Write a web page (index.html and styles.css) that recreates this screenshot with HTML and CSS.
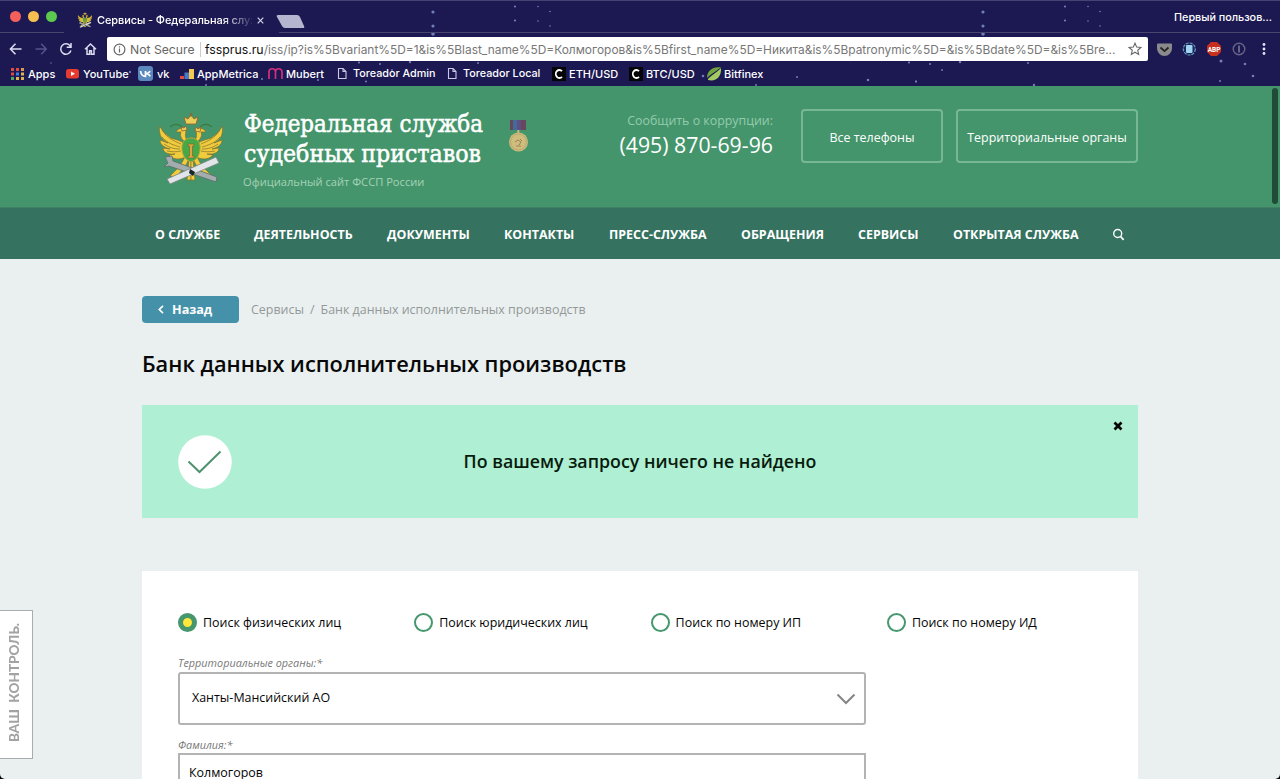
FILE: index.html
```html
<!DOCTYPE html>
<html lang="ru">
<head>
<meta charset="utf-8">
<title>Сервисы - Федеральная служба судебных приставов</title>
<link rel="stylesheet" href="styles.css">
</head>
<body>
<div class="window">
  <header class="chrome">
    <svg class="stars" width="1280" height="86" viewBox="0 0 1280 86" aria-hidden="true">
      <g id="cluster" fill="#8fa0e0">
        <circle cx="433" cy="12" r="1.6"/><circle cx="433" cy="26" r="1.6"/><circle cx="433" cy="34" r="1.8"/>
        <circle cx="515" cy="6.500" r="1.1"/><circle cx="515" cy="20.500" r="1.1"/><circle cx="538" cy="6.500" r=".8"/><circle cx="538" cy="21" r=".8"/><circle cx="550" cy="11.500" r=".8"/><circle cx="550" cy="26" r=".8"/>
        <circle cx="359" cy="62.500" r="1.1"/><circle cx="380" cy="64" r="1"/><circle cx="410" cy="62" r="1.2"/><circle cx="478" cy="63" r="1"/><circle cx="366" cy="81.500" r="1"/><circle cx="392" cy="70" r=".9"/>
        <circle cx="703" cy="76" r="1.3"/><circle cx="797" cy="77" r="1"/><circle cx="756" cy="85" r="1"/>
      </g>
      <use href="#cluster" x="550"/>
      <g fill="#8fa0e0"><circle cx="868" cy="80" r="1.3"/><circle cx="916" cy="81.500" r="1"/><circle cx="1034" cy="85" r="1.2"/><circle cx="1221" cy="61" r="1.5"/><circle cx="1245" cy="64" r="1.3"/><circle cx="1220" cy="81" r="1"/><circle cx="130" cy="72" r="1.2"/><circle cx="262" cy="79" r="1"/><circle cx="318" cy="80" r="1"/><circle cx="206" cy="85" r="1"/><circle cx="51" cy="63" r=".7"/></g>
    </svg>
    <div class="tabs">
      <div class="lights"><i class="red"></i><i class="yellow"></i><i class="green"></i></div>
      <div class="tab">
        <svg width="16" height="16" viewBox="0 0 64 72"><use href="#emblem"/></svg>
        <span class="tab-title">Сервисы - Федеральная служ</span>
        <svg class="tab-close" width="7" height="7" viewBox="0 0 7 7"><path d="M.7.7l5.600 5.600M6.300.7L.7 6.300" stroke="#d5d5e8" stroke-width="1.200"/></svg>
      </div>
      <div class="strip">
        <svg width="30" height="14" viewBox="0 0 30 14"><path d="M2 0h19q2 0 3 2l4 9q1 2-1 2H9q-2 0-3-2L1 2Q0 0 2 0z" fill="#b6b5cf"/></svg>
        <span class="profile">Первый пользов...</span>
      </div>
    </div>
    <div class="toolbar">
      <svg class="navicons" width="98" height="24" viewBox="0 0 98 24" fill="none" stroke="#dddcf0" stroke-width="1.500">
        <path d="M21.500 12H11M15.500 6.800L10.400 12l5.100 5.200"/>
        <path d="M35.500 12H46M41.200 6.800l5 5.200-5 5.200" stroke="#55538a"/>
        <path d="M70.300 9.200A5.200 5.200 0 1 0 70.900 13.500M71 6v4.200h-4.300"/>
        <path d="M85 12.300L90.500 7l5.500 5.300M87 11v6.300h2.600v-3.500h1.800v3.500H94V11"/>
      </svg>
      <div class="omnibox">
        <svg width="13" height="13" viewBox="0 0 13 13" fill="none" stroke="#666" stroke-width="1.200"><circle cx="6.500" cy="6.500" r="5.400"/><path d="M6.500 5.600v4M6.500 3.200v1.400"/></svg>
        <span class="secure">Not Secure</span>
        <span class="url"><b>fssprus.ru</b>/iss/ip?is%5Bvariant%5D=1&amp;is%5Blast_name%5D=Колмогоров&amp;is%5Bfirst_name%5D=Никита&amp;is%5Bpatronymic%5D=&amp;is%5Bdate%5D=&amp;is%5Bre...</span>
        <svg class="fav" width="14" height="14" viewBox="0 0 14 14"><path d="M7 1.200l1.700 3.900 4.200.4-3.200 2.800 1 4.100L7 10.200l-3.700 2.200 1-4.100L1.100 5.500l4.200-.4z" fill="none" stroke="#666" stroke-width="1.100"/></svg>
      </div>
      <svg width="132" height="24" viewBox="1148 37 132 24">
        <path d="M1158 43.500h13q1 0 1 1v4a7.500 7.500 0 0 1-15 0v-4q0-1 1-1z" fill="#8a898c"/><path d="M1160.500 47.500l4 3.600 4-3.600" fill="none" stroke="#222" stroke-width="1.800"/>
        <circle cx="1189.300" cy="49" r="6" fill="#19265c" stroke="#6998bc" stroke-width="1.200" stroke-dasharray="3 1"/><rect x="1186" y="45" width="6.500" height="8" rx="1" fill="#a2d4f2"/>
        <path d="M1211 42h6l4 4v6l-4 4h-6l-4-4v-6z" fill="#c7301e"/><text x="1214" y="51.700" class="abp">ABP</text>
        <circle cx="1239" cy="49" r="5.800" fill="none" stroke="#666585" stroke-width="1.400"/><path d="M1239 45.500v7" stroke="#666585" stroke-width="2"/>
        <g fill="#e5e4f3"><circle cx="1264" cy="44.500" r="1.400"/><circle cx="1264" cy="49" r="1.400"/><circle cx="1264" cy="53.500" r="1.400"/></g>
      </svg>
    </div>
    <nav class="bookmarks">
      <a><svg width="13" height="13" viewBox="0 0 13 13"><path d="M0 1h3v3H0zM0 5.500h3v3H0z" fill="#d94b43"/><path d="M5 1h3v3H5z" fill="#d94b43"/><path d="M10 1h3v3h-3z" fill="#d99b52"/><path d="M5 5.500h3v3H5z" fill="#3f7fe0"/><path d="M10 5.500h3v3h-3zM5 10h3v3H5z" fill="#e0b54a"/><path d="M0 10h3v3H0z" fill="#4da864"/><path d="M10 10h3v3h-3z" fill="#d9b04a"/></svg>Apps</a>
      <a><svg width="13" height="13" viewBox="0 0 13 13"><rect y="2" width="13" height="9.500" rx="2.500" fill="#e63b2e"/><path d="M5 4.500v4.500l4-2.200z" fill="#fff"/></svg>YouTube</a>
      <a class="wide"><svg width="15" height="15" viewBox="0 0 15 15"><rect width="15" height="15" rx="3" fill="#5b88bd"/><path d="M2.500 5c.5 3.500 2.300 5.300 5 5.300V5M12 5c-.6 1.300-2 2.500-4 2.500 2 .1 3.300 1.300 4.300 2.800" fill="none" stroke="#fff" stroke-width="1.700"/></svg>vk</a>
      <a><svg width="14" height="14" viewBox="0 0 14 14"><path d="M0 9h4v3H0z" fill="#dc4a48"/><path d="M4.500 5.500h4.500V12H4.500z" fill="#4b78c8"/><path d="M9 2h5v10H9z" fill="#f3cb52"/></svg>AppMetrica</a>
      <a class="mubert"><svg width="15" height="13" viewBox="0 0 15 13"><path d="M1 12V5a3.200 3.200 0 0 1 6.500 0v7M7.500 5A3.200 3.200 0 0 1 14 5v7" fill="none" stroke="#d32f7c" stroke-width="1.700"/></svg>Mubert</a>
      <a class="doc"><svg width="10" height="13" viewBox="0 0 10 13"><path d="M1.500 1.500h4.500l3 3v7H1.500zM6 1.500v3h3" fill="none" stroke="#cbcae2" stroke-width="1.100"/></svg>Toreador Admin</a>
      <a class="doc"><svg width="10" height="13" viewBox="0 0 10 13"><path d="M1.500 1.500h4.500l3 3v7H1.500zM6 1.500v3h3" fill="none" stroke="#cbcae2" stroke-width="1.100"/></svg>Toreador Local</a>
      <a><svg width="14" height="14" viewBox="0 0 14 14"><path d="M0 0h14v14H0z" fill="#050507"/><path d="M10 4.200A3.600 4 0 1 0 10 9.800" fill="none" stroke="#fff" stroke-width="1.800"/></svg>ETH/USD</a>
      <a><svg width="14" height="14" viewBox="0 0 14 14"><path d="M0 0h14v14H0z" fill="#050507"/><path d="M10 4.200A3.600 4 0 1 0 10 9.800" fill="none" stroke="#fff" stroke-width="1.800"/></svg>BTC/USD</a>
      <a><svg width="15" height="14" viewBox="0 0 15 14"><path d="M0 11C0 3 6 0 14 0 10 4 5 6 0 11z" fill="#6fa53c"/><path d="M1 12C6 7 10 5 14 1c.5 8-4 14-13 12z" fill="#a3cb62"/></svg>Bitfinex</a>
    </nav>
  </header>

  <main class="page">
    <div class="masthead">
      <svg class="emblem" width="64" height="72" viewBox="0 0 64 72">
        <g id="emblem">
          <g id="wing" fill="#f0cb3d" stroke="#80702c" stroke-width=".7">
            <path d="M29 43C20 48 13 46 10 42l6-1C7 42 4 38 4 35l7 1C3 34 1 30 1 27l8 3C1 26 0 20 .5 13 4 19 8 22 12 25c6 2 12 3 14 7z"/>
            <path d="M3 17c5 8 12 11 19 14M3 24c6 7 12 8 18 10M5 31c6 4 10 5 16 5M8 38c6 1 9 1 14 0" fill="none"/>
            <path d="M31 30c-5-3-5-8-4-12-3-4-8-3-10 1l5 0c-2 5 2 9 7 12z"/>
            <path d="M26 43c-3 9-9 14-15 20l7 1c4-7 10-11 12-19zM30 46l-2 21h4V46z"/>
          </g>
          <use href="#wing" transform="matrix(-1 0 0 1 64 0)"/>
          <path d="M11 14c4-4 9-3 12 0M41 14c4-4 9-3 12 0" fill="none" stroke="#397b3e" stroke-width="1.200"/>
          <path d="M27 11l-2-7 4 2 3-4 3 4 4-2-2 7zM32 0v4M30.500 1h3M23 18l-1-4 3 1 2-2 1 4zM36 18l1-4 2 2 3-2-1 5z" fill="#ebcf5a" stroke="#9a5f2b" stroke-width=".8"/>
          <path d="M32 25c7 0 10 6 9 12-1 7-4 10-9 12-5-2-8-5-9-12-1-6 2-12 9-12z" fill="#46a947" stroke="#c0a63a"/>
          <path d="M29 31h6v2h-1.500v10H35v2h-6v-2h1.500V33H29z" fill="#dda642" stroke="#71612a" stroke-width=".6"/>
          <path d="M6 44l7-1 1 5 44 16-1 5-47-16-5 1 4-4z" fill="#a3adad" stroke="#596c6d" stroke-width=".8"/>
          <path d="M8 66l49-22 3 6L11 71z" fill="#e1e4e8" stroke="#78857f" stroke-width=".8"/>
          <path d="M31 56l5 3-2 4-4-3z" fill="#182827"/>
        </g>
      </svg>
      <div class="brand">
        <svg class="wordmark" width="250" height="60" viewBox="0 0 250 60"><text x="1" y="23" textLength="239" lengthAdjust="spacingAndGlyphs">Федеральная служба</text><text x="1" y="53" textLength="237" lengthAdjust="spacingAndGlyphs">судебных приставов</text></svg>
        <div class="subtitle">Официальный сайт ФССП России</div>
      </div>
      <svg class="medal" width="20" height="34" viewBox="0 0 20 34"><path d="M1 1h16v10H1z" fill="#68475e"/><path d="M4 1h4v10H4z" fill="#426b99"/><path d="M8 1h4v10H8z" fill="#5c4f85"/><path d="M9.300 11v3" stroke="#c8b879" stroke-width="2"/><circle cx="9.500" cy="23" r="9.500" fill="#cfbd7e"/><circle cx="9.500" cy="23" r="8" fill="none" stroke="#b3a268" stroke-width=".8"/><path d="M6 23l3-2 3 2-2 3M7 27h5M11 20l2 2" fill="none" stroke="#a08358" stroke-width="1"/></svg>
      <div class="phone"><span>Сообщить о коррупции:</span><strong>(495) 870-69-96</strong></div>
      <a class="outline all">Все телефоны</a>
      <a class="outline territory">Территориальные органы</a>
    </div>
    <nav class="menu">
      <a>О СЛУЖБЕ</a><a>ДЕЯТЕЛЬНОСТЬ</a><a>ДОКУМЕНТЫ</a><a>КОНТАКТЫ</a><a>ПРЕСС-СЛУЖБА</a><a>ОБРАЩЕНИЯ</a><a>СЕРВИСЫ</a><a>ОТКРЫТАЯ СЛУЖБА</a>
      <svg width="13" height="13" viewBox="0 0 13 13" fill="none" stroke="#fff" stroke-width="1.400"><circle cx="5.700" cy="5.500" r="4"/><path d="M8.600 8.500l3 3.300" stroke-width="1.800"/></svg>
    </nav>
    <div class="content">
      <div class="crumbs">
        <a class="back"><svg width="6" height="9" viewBox="0 0 6 9"><path d="M5 .8L1.300 4.500 5 8.200" fill="none" stroke="#fff" stroke-width="1.700"/></svg>Назад</a>
        <span class="c1">Сервисы</span><span class="slash">/</span><span class="c2">Банк данных исполнительных производств</span>
      </div>
      <h1>Банк данных исполнительных производств</h1>
      <section class="alert">
        <svg class="tick" width="54" height="54" viewBox="0 0 54 54"><circle cx="27" cy="27" r="26.800" fill="#fff"/><path d="M10.500 26.500L21.500 37 42.500 16.500" fill="none" stroke="#4f9270" stroke-width="2"/></svg>
        <p>По вашему запросу ничего не найдено</p>
        <svg class="dismiss" width="10" height="10" viewBox="0 0 10 10"><path d="M1.500 1.500l7 7M8.500 1.500l-7 7" stroke="#050505" stroke-width="2.700"/></svg>
      </section>
      <form class="search">
        <div class="radios">
          <label><i class="radio checked"></i>Поиск физических лиц</label>
          <label><i class="radio"></i>Поиск юридических лиц</label>
          <label><i class="radio"></i>Поиск по номеру ИП</label>
          <label><i class="radio"></i>Поиск по номеру ИД</label>
        </div>
        <div class="caption">Территориальные органы:*</div>
        <div class="select"><span>Ханты-Мансийский АО</span><svg width="20" height="12" viewBox="0 0 20 12"><path d="M1.500 1.500L10 10l8.500-8.500" fill="none" stroke="#858585" stroke-width="2"/></svg></div>
        <div class="caption second">Фамилия:*</div>
        <div class="field">Колмогоров</div>
      </form>
    </div>
  </main>
  <aside class="control"><span>ВАШ&nbsp; КОНТРОЛЬ.</span></aside>
  <i class="scrollbar"></i>
</div>
</body>
</html>
```
FILE: styles.css
```css
* { box-sizing: border-box; }
body { margin: 0; background: #000; font-family: "Open Sans", "Noto Sans", sans-serif; }
svg { display: block; flex: none; }
.window { position: relative; width: 1280px; height: 779px; overflow: hidden; background: #eaf0f0; border-radius: 0 0 5px 5px; }

/* Browser chrome */
.chrome { position: relative; height: 86px; background: #1b1852; border-top: 1px solid #454372; color: #fff; font-family: Inter, Roboto, sans-serif; }
.stars { position: absolute; left: 0; top: -1px; opacity: .75; }
.tabs { position: relative; height: 32px; display: grid; grid-template-columns: 64px 215px 1fr; }
.lights { display: flex; gap: 7px; padding: 10px 0 0 10px; border-bottom: 1px solid #48466f; }
.lights i { width: 11px; height: 11px; border-radius: 50%; }
.red { background: #f4605a; }
.yellow { background: #f7bf4f; }
.green { background: #5cc84e; }
.tab { display: flex; align-items: center; padding: 6px 0 0 13px; }
.tab-title { width: 155px; margin-left: 4px; white-space: nowrap; font-size: 11px; letter-spacing: -.1px; font-weight: 500; -webkit-mask-image: linear-gradient(90deg, #000 125px, transparent 158px); mask-image: linear-gradient(90deg, #000 125px, transparent 158px); }
.tab-close { margin-left: 5px; }
.strip { display: flex; justify-content: space-between; border-bottom: 1px solid #48466f; padding: 10px 8px 0 0; }
.strip svg { margin-top: 4px; margin-left: -3px; }
.profile { width: 98px; font-size: 10.800px; line-height: 14px; font-weight: 500; white-space: nowrap; }
.toolbar { position: relative; display: flex; height: 32px; padding-top: 4px; }
.navicons { margin-right: 9px; }
.omnibox { display: flex; align-items: center; width: 1041px; height: 24px; padding: 0 6px; background: #fff; border-radius: 2px; font-size: 12.400px; color: #666; }
.secure { width: 71px; margin-left: 4px; padding-right: 5px; border-right: 1px solid #ccc; white-space: nowrap; font-size: 12.200px; }
.url { flex: 1; margin-left: 4px; color: #777; white-space: nowrap; font-size: 11.920px; }
.url b { color: #111; font-weight: 400; font-size: 12.300px; }
.abp { font: 700 6.500px Roboto, sans-serif; fill: #fff; text-anchor: middle; }
.bookmarks { position: relative; display: grid; grid-template-columns: 55px 72px 42px 88px 69px 110px 105px 77px 78px 1fr; padding: 0 0 0 11px; height: 17px; font-size: 11px; font-weight: 500; }
.bookmarks a { display: grid; grid-template-columns: 17px 1fr; align-items: center; white-space: nowrap; }
.bookmarks a.wide { grid-template-columns: 19px 1fr; }
.bookmarks a.mubert { grid-template-columns: 18px 1fr; }
.bookmarks a.doc { grid-template-columns: 16px 1fr; font-size: 10.800px; }

/* Masthead */
.masthead { display: flex; height: 122px; padding-left: 159px; background: #44956b; color: #fff; border-bottom: 1px solid #408064; }
.emblem { margin-top: 27px; }
.brand { width: 266px; margin-left: 20px; padding-top: 23px; }
.wordmark text { font-family: "Roboto Slab", "DejaVu Serif", serif; font-size: 23.500px; fill: #fff; stroke: #fff; stroke-width: .55px; }
.subtitle { margin-top: 5px; font-size: 11.150px; line-height: 16px; color: #a6d2b8; }
.medal { margin-top: 33px; }
.phone { width: 244px; margin-top: 27px; text-align: right; display: flex; flex-direction: column; }
.phone span { font-size: 12.400px; line-height: 16px; color: #94cbae; }
.phone strong { margin-top: 3px; font-size: 21.300px; line-height: 26px; font-weight: 400; white-space: nowrap; }
.outline { display: flex; align-items: center; justify-content: center; height: 54px; margin-top: 23px; padding-top: 2px; border: 2px solid #77b795; border-radius: 4px; font-size: 12.450px; white-space: nowrap; }
.all { width: 142px; margin-left: 28px; }
.territory { width: 182px; margin-left: 13px; }
.menu { display: grid; grid-template-columns: 99px 133px 117px 105px 132px 117px 95px 159px 1fr; align-items: center; height: 51px; padding: 2px 0 0 155px; background: #35725f; color: #fff; font-size: 12.450px; font-weight: 700; white-space: nowrap; }

/* Content */
.content { width: 996px; margin: 0 auto; padding-top: 36px; }
.crumbs { display: flex; height: 28px; align-items: center; font-size: 12.440px; color: #949898; white-space: nowrap; }
.crumbs span { padding-top: 1px; }
.back { display: flex; align-items: center; gap: 8px; width: 97px; height: 27px; padding: 0 0 1px 16px; margin: 1px 12px 0 0; border-radius: 4px; background: #4491a9; color: #fff; font-weight: 700; font-size: 12.600px; }
.slash { margin: 0 6px; }
h1 { margin: 25px 0 0; font-size: 21.800px; line-height: 32px; font-weight: 600; color: #080808; white-space: nowrap; }
.alert { display: flex; align-items: center; height: 113px; margin-top: 25px; padding: 0 15px 0 36px; background: #afefd3; }
.alert p { flex: 1; margin: 0 0 2px; padding-right: 65px; text-align: center; font-size: 17.800px; font-weight: 600; color: #071b0c; }
.dismiss { align-self: flex-start; margin-top: 16px; }
.search { height: 240px; margin-top: 53px; padding: 39px 36px 0; background: #fff; }
.radios { display: grid; grid-template-columns: repeat(4, 236.300px); height: 24px; font-size: 12.440px; color: #050505; }
.radios label { display: flex; align-items: center; white-space: nowrap; }
.radio { width: 19px; height: 19px; margin-right: 6px; border: 2px solid #46976d; border-radius: 50%; }
.checked { border-width: 5px; background: #ffe83b; }
.caption { margin-top: 21px; font-size: 10.850px; line-height: 16px; font-style: italic; color: #777; }
.select { display: flex; align-items: center; justify-content: space-between; width: 688px; height: 53px; margin-top: 1px; border: 2px solid #b3b3b3; border-radius: 3px; padding: 0 8px 0 12px; font-size: 12.440px; color: #050505; }
.select span { padding-bottom: 2px; }
.caption.second { margin-top: 12px; }
.field { width: 688px; height: 53px; border: 2px solid #b3b3b3; padding: 9px; font-size: 12.440px; line-height: 17px; color: #050505; }

/* Floating elements */
.control { position: absolute; left: -1px; top: 610px; width: 34px; height: 149px; display: flex; align-items: center; justify-content: center; padding: 0 4px 4px 0; background: #fff; border: 1px solid #a9adad; color: #a3a3a3; font: 900 13.500px Lato, sans-serif; }
.control span { writing-mode: vertical-rl; transform: rotate(180deg); white-space: nowrap; }
.scrollbar { position: absolute; right: 2px; top: 88px; width: 6px; height: 116px; border-radius: 3px; background: #204b37; }
```
